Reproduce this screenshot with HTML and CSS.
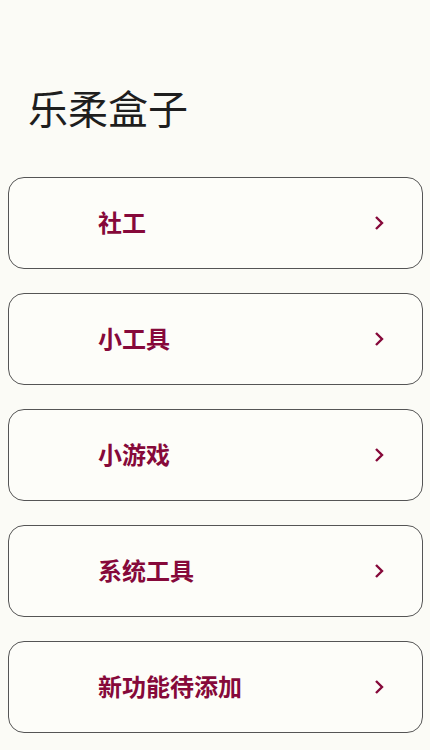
FILE: index.html
```html
<!DOCTYPE html>
<html>

<head>
	<meta name="viewport" content="width=device-width, initial-scale=1" />
	<link rel="stylesheet" href="styles.css">
</head>

<body>
	<h1 class="pageTitle">乐柔盒子</h1>

	<div class="menuList">
		<a class="menuItem" href="#">
			<span class="menuLabel">社工</span>
			<svg class="menuArrow" viewBox="0 0 10 16" width="10" height="16"><path d="M2 2 L8 8 L2 14" /></svg>
		</a>
		<a class="menuItem" href="#">
			<span class="menuLabel">小工具</span>
			<svg class="menuArrow" viewBox="0 0 10 16" width="10" height="16"><path d="M2 2 L8 8 L2 14" /></svg>
		</a>
		<a class="menuItem" href="#">
			<span class="menuLabel">小游戏</span>
			<svg class="menuArrow" viewBox="0 0 10 16" width="10" height="16"><path d="M2 2 L8 8 L2 14" /></svg>
		</a>
		<a class="menuItem" href="#">
			<span class="menuLabel">系统工具</span>
			<svg class="menuArrow" viewBox="0 0 10 16" width="10" height="16"><path d="M2 2 L8 8 L2 14" /></svg>
		</a>
		<a class="menuItem" href="#">
			<span class="menuLabel">新功能待添加</span>
			<svg class="menuArrow" viewBox="0 0 10 16" width="10" height="16"><path d="M2 2 L8 8 L2 14" /></svg>
		</a>
	</div>
</body>

</html>
```

FILE: styles.css
```css
body {
	margin: 0;
	background-color: #fbfbf6;
	font-family: "Noto Sans CJK SC", "Noto Sans", sans-serif;
}

.pageTitle {
	margin: 0;
	padding: 83px 0 3px 28px;
	font-size: 40px;
	line-height: 48px;
	font-weight: 400;
	color: #1e1e1e;
}

.menuList {
	display: flex;
	flex-direction: column;
	gap: 24px;
	padding: 43px 7px 0 8px;
}

.menuItem {
	display: flex;
	align-items: center;
	justify-content: space-between;
	height: 90px;
	padding: 0 38px 0 89px;
	border: 1px solid #555555;
	border-radius: 16px;
	background-color: #fdfdf9;
	text-decoration: none;
}

.menuLabel {
	padding-bottom: 3px;
	font-size: 24px;
	font-weight: 700;
	color: #86093a;
}

.menuArrow {
	fill: none;
	stroke: #86093a;
	stroke-width: 2.4;
}
```
